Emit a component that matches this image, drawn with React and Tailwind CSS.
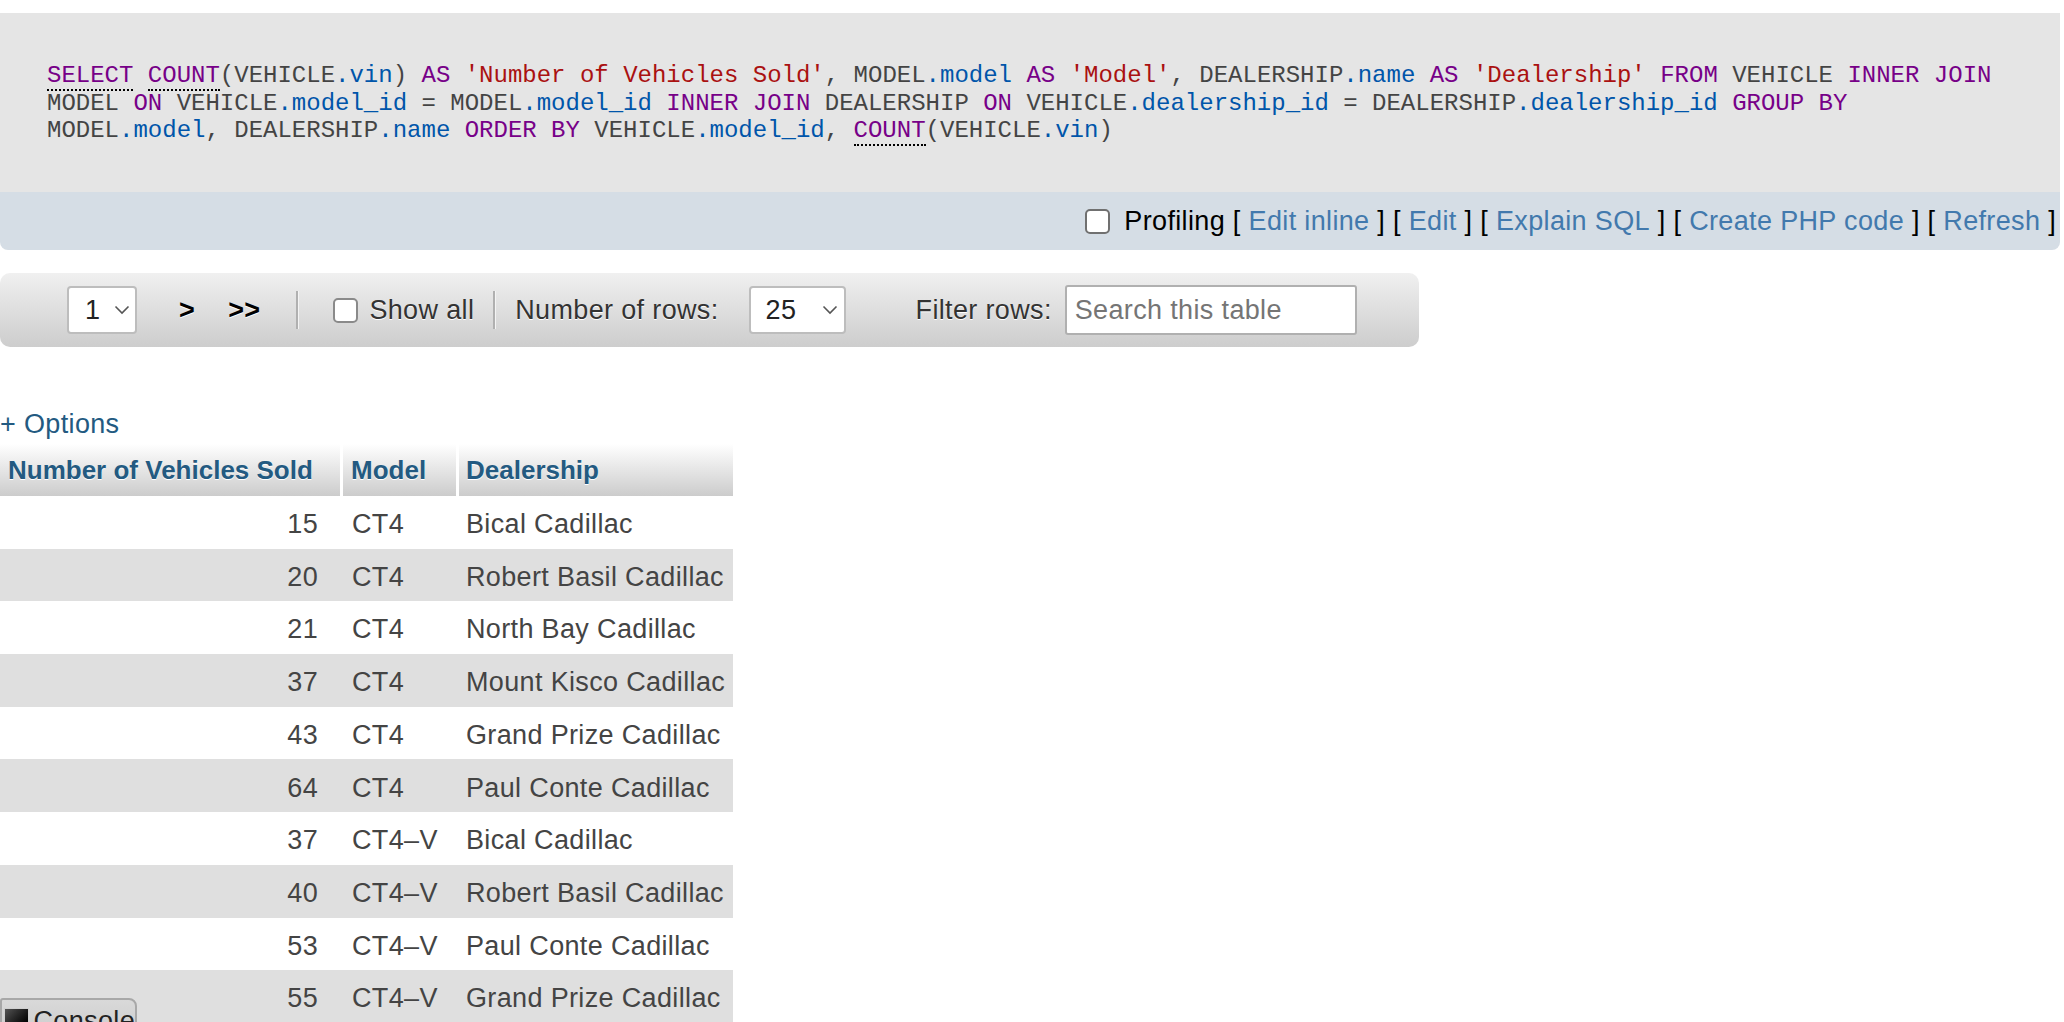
import React from "react";

const KW = "text-[#770088]";
const VAR = "text-[#0055aa]";
const STR = "text-[#aa1111]";

// [text, kind] kind: k = keyword, ku = keyword with doc link, v = variable, s = string
const sqlLines = [
  [
    ["SELECT", "ku"], [" "], ["COUNT", "ku"], ["(VEHICLE"], [".vin", "v"], [") "], ["AS", "k"], [" "],
    ["'Number of Vehicles Sold'", "s"], [", MODEL"], [".model", "v"], [" "], ["AS", "k"], [" "],
    ["'Model'", "s"], [", DEALERSHIP"], [".name", "v"], [" "], ["AS", "k"], [" "], ["'Dealership'", "s"],
    [" "], ["FROM", "k"], [" VEHICLE "], ["INNER JOIN", "k"],
  ],
  [
    ["MODEL "], ["ON", "k"], [" VEHICLE"], [".model_id", "v"], [" = MODEL"], [".model_id", "v"], [" "],
    ["INNER JOIN", "k"], [" DEALERSHIP "], ["ON", "k"], [" VEHICLE"], [".dealership_id", "v"],
    [" = DEALERSHIP"], [".dealership_id", "v"], [" "], ["GROUP BY", "k"],
  ],
  [
    ["MODEL"], [".model", "v"], [", DEALERSHIP"], [".name", "v"], [" "], ["ORDER BY", "k"], [" VEHICLE"],
    [".model_id", "v"], [", "], ["COUNT", "ku"], ["(VEHICLE"], [".vin", "v"], [")"],
  ],
];

const rows = [
  [15, "CT4", "Bical Cadillac"],
  [20, "CT4", "Robert Basil Cadillac"],
  [21, "CT4", "North Bay Cadillac"],
  [37, "CT4", "Mount Kisco Cadillac"],
  [43, "CT4", "Grand Prize Cadillac"],
  [64, "CT4", "Paul Conte Cadillac"],
  [37, "CT4\u2013V", "Bical Cadillac"],
  [40, "CT4\u2013V", "Robert Basil Cadillac"],
  [53, "CT4\u2013V", "Paul Conte Cadillac"],
  [55, "CT4\u2013V", "Grand Prize Cadillac"],
];

function Token({ t }) {
  const [text, kind] = t;
  if (kind === "ku")
    return <span className={`${KW} border-b-2 border-dotted border-black`}>{text}</span>;
  if (kind === "k") return <span className={KW}>{text}</span>;
  if (kind === "v") return <span className={VAR}>{text}</span>;
  if (kind === "s") return <span className={STR}>{text}</span>;
  return <span>{text}</span>;
}

function Chevron() {
  return (
    <svg width="16" height="10" viewBox="0 0 16 10" className="shrink-0">
      <polyline points="1.5,1.5 8,8 14.5,1.5" fill="none" stroke="#555" strokeWidth="1.6" />
    </svg>
  );
}

function Box({ className = "" }) {
  return <span className={`block w-[25px] h-[25px] rounded-[5px] border-2 bg-white ${className}`}></span>;
}

function Sep() {
  return <span className="block w-[3px] h-[38px] bg-[#b0b0b0] border-r border-[#f4f4f4]"></span>;
}

export default function App() {
  return (
    <div className="relative h-[1022px] overflow-hidden bg-white font-['Liberation_Sans',Arial,sans-serif] text-[27px] tracking-[0.35px] text-[#444]">
      {/* SQL query box */}
      <div className="mt-[13px] mr-[4px] rounded-b-[8px] overflow-hidden">
        <div className="h-[179px] bg-[#e5e5e5] pl-[47px] pt-[49px] font-['Liberation_Mono','Courier_New',monospace] text-[24px] tracking-normal leading-[27.5px] text-[#444] whitespace-pre">
          {sqlLines.map((line, i) => (
            <div key={i}>
              {line.map((t, j) => (
                <Token key={j} t={t} />
              ))}
            </div>
          ))}
        </div>
        <div className="h-[58px] bg-[#d5dde5] flex items-center justify-end pr-[4px] text-black whitespace-pre">
          <Box className="border-[#707070]" />
          <span className="ml-[14px]">Profiling [ </span>
          <span className="text-[#4279ad]">Edit inline</span>
          <span> ] [ </span>
          <span className="text-[#4279ad]">Edit</span>
          <span> ] [ </span>
          <span className="text-[#4279ad]">Explain SQL</span>
          <span> ] [ </span>
          <span className="text-[#4279ad]">Create PHP code</span>
          <span> ] [ </span>
          <span className="text-[#4279ad]">Refresh</span>
          <span> ]</span>
        </div>
      </div>

      {/* navigation bar */}
      <div className="mt-[23px] w-[1419px] h-[74px] rounded-[10px] bg-gradient-to-b from-[#f0f0f0] to-[#cdcdcd] flex items-center text-[#333] [text-shadow:0_1px_0_#fff]">
        <div className="ml-[67px] w-[70px] h-[48px] bg-white border-2 border-[#bdbdbd] rounded-[4px] flex items-center pl-[16px] gap-[14px] text-[#222]">
          <span>1</span>
          <Chevron />
        </div>
        <span className="ml-[42px] font-bold text-black">&gt;</span>
        <span className="ml-[33px] font-bold text-black">&gt;&gt;</span>
        <span className="ml-[36px]"><Sep /></span>
        <span className="ml-[34px]"><Box className="border-[#8a8a8a]" /></span>
        <span className="ml-[11px]">Show all</span>
        <span className="ml-[19px]"><Sep /></span>
        <span className="ml-[19px]">Number of rows:</span>
        <div className="ml-[30px] w-[97px] h-[48px] bg-white border-2 border-[#bdbdbd] rounded-[4px] flex items-center pl-[15px] gap-[26px] text-[#222]">
          <span>25</span>
          <Chevron />
        </div>
        <span className="ml-[70px]">Filter rows:</span>
        <div className="ml-[13px] w-[292px] h-[50px] bg-white border-2 border-[#b0b0b0] rounded-[3px] flex items-center pl-[8px] text-[#757575] [text-shadow:none]">
          Search this table
        </div>
      </div>

      {/* options link */}
      <div className="mt-[62px] text-[#235a81] leading-[30px]">+ Options</div>

      {/* result table */}
      <table className="mt-[5px] table-fixed w-[733px] border-separate border-spacing-0 text-left">
        <thead>
          <tr className="h-[52px] text-[26px] tracking-normal">
            <th className="w-[343px] pl-[8px] border-r-[3px] border-white bg-gradient-to-b from-white to-[#cccccc] text-[#235a81] font-bold [text-shadow:0_1px_0_#fff]">
              Number of Vehicles Sold
            </th>
            <th className="w-[116px] pl-[8px] border-r-[3px] border-white bg-gradient-to-b from-white to-[#cccccc] text-[#235a81] font-bold [text-shadow:0_1px_0_#fff]">
              Model
            </th>
            <th className="w-[274px] pl-[7px] bg-gradient-to-b from-white to-[#cccccc] text-[#235a81] font-bold [text-shadow:0_1px_0_#fff]">
              Dealership
            </th>
          </tr>
        </thead>
        <tbody>
          {rows.map((r, i) => (
            <tr key={i} className={`h-[52.7px] ${i % 2 === 1 ? "bg-[#dfdfdf]" : "bg-white"}`}>
              <td className="pr-[25px] pt-[4px] text-right">{r[0]}</td>
              <td className="pl-[9px] pt-[4px] whitespace-nowrap">{r[1]}</td>
              <td className="pl-[7px] pt-[4px] whitespace-nowrap">{r[2]}</td>
            </tr>
          ))}
        </tbody>
      </table>

      {/* console tab */}
      <div className="absolute left-0 top-[998px] w-[137px] h-[50px] border-2 border-[#a8a8a8] rounded-tr-[8px] rounded-tl-[3px] bg-gradient-to-b from-[#d9d9d9] to-[#c9c9c9] flex items-start pt-[6px] pl-[2px] text-[#222]">
        <span className="block w-[26px] h-[26px] border border-[#cfcfcf] bg-gradient-to-br from-[#555] to-black mt-[2px]"></span>
        <span className="ml-[4px] leading-[30px]">Console</span>
      </div>
    </div>
  );
}
